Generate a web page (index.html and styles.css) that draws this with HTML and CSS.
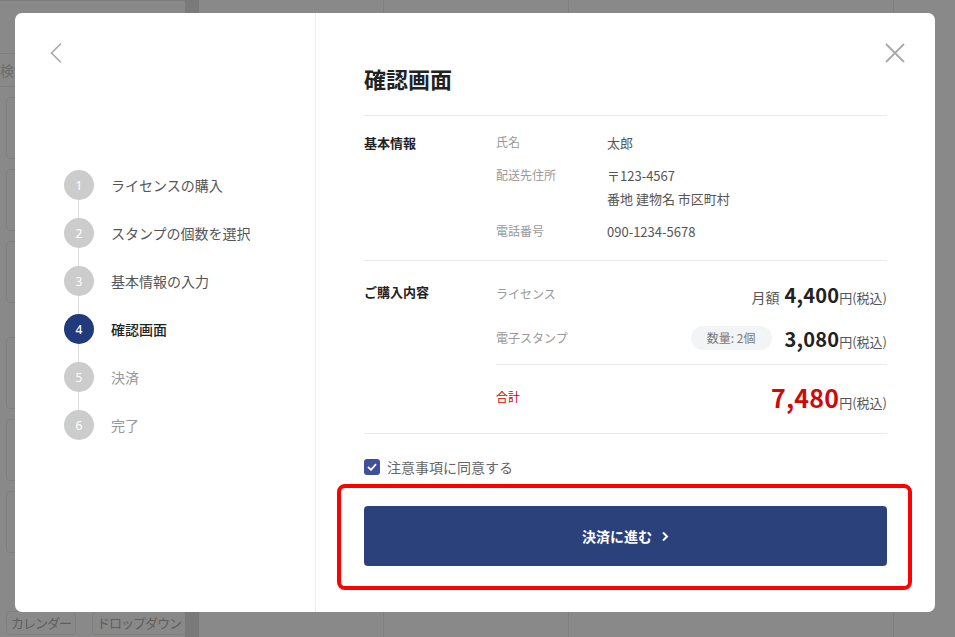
FILE: index.html
```html
<!DOCTYPE html>
<html lang="ja">
<head>
<meta charset="UTF-8">
<meta name="viewport" content="width=device-width, initial-scale=1.0">
<title>確認画面</title>
<link rel="stylesheet" href="styles.css">
</head>
<body>
    <!-- 背景のアプリ画面 (オーバーレイで暗くなっている) -->
    <div class="app">
        <div class="app-side">
            <div class="app-search">検索</div>
            <div class="app-card"></div>
            <div class="app-card"></div>
            <div class="app-card"></div>
            <div class="app-card tall"></div>
            <div class="app-card"></div>
            <div class="app-card"></div>
            <div class="app-buttons">
                <span class="app-btn">カレンダー</span>
                <span class="app-btn">ドロップダウン</span>
            </div>
        </div>
        <div class="app-strip"></div>
        <div class="app-main">
            <div class="app-col"></div>
            <div class="app-col"></div>
            <div class="app-col last"></div>
        </div>
    </div>

    <div class="overlay">
        <div class="modal">
            <!-- 左: ステップ -->
            <div class="modal-steps">
                <button class="back">
                    <svg width="14" height="22" viewBox="0 0 14 22"><polyline points="12,1.5 2.5,11 12,20.5" fill="none" stroke="#a8a8a8" stroke-width="1.6"/></svg>
                </button>
                <ol class="steps">
                    <li class="done"><span class="num">1</span>ライセンスの購入</li>
                    <li class="done"><span class="num">2</span>スタンプの個数を選択</li>
                    <li class="done"><span class="num">3</span>基本情報の入力</li>
                    <li class="current"><span class="num">4</span>確認画面</li>
                    <li><span class="num">5</span>決済</li>
                    <li><span class="num">6</span>完了</li>
                </ol>
            </div>

            <!-- 右: 確認内容 -->
            <div class="modal-body">
                <button class="close">
                    <svg width="20" height="20" viewBox="0 0 20 20"><path d="M1 1L19 19M19 1L1 19" stroke="#a8a8a8" stroke-width="1.8"/></svg>
                </button>
                <h1 class="title">確認画面</h1>

                <div class="section">
                    <div class="section-head">基本情報</div>
                    <div class="section-rows info">
                        <div class="row"><span class="label">氏名</span><span class="value">太郎</span></div>
                        <div class="row"><span class="label">配送先住所</span><span class="value">〒123-4567<br>番地 建物名 市区町村</span></div>
                        <div class="row"><span class="label">電話番号</span><span class="value">090-1234-5678</span></div>
                    </div>
                </div>

                <div class="section">
                    <div class="section-head">ご購入内容</div>
                    <div class="section-rows">
                        <div class="items">
                            <div class="row price-row">
                                <span class="label">ライセンス</span>
                                <span class="price"><span class="prefix">月額</span><b>4,400</b><span class="unit">円(税込)</span></span>
                            </div>
                            <div class="row price-row">
                                <span class="label">電子スタンプ</span>
                                <span class="price"><span class="badge">数量: 2個</span><b>3,080</b><span class="unit">円(税込)</span></span>
                            </div>
                        </div>
                        <div class="row price-row total">
                            <span class="label">合計</span>
                            <span class="price"><b>7,480</b><span class="unit">円(税込)</span></span>
                        </div>
                    </div>
                </div>

                <label class="agree">
                    <span class="check">
                        <svg width="10" height="8" viewBox="0 0 10 8"><polyline points="1,4 4,6.8 9,1.2" fill="none" stroke="#fff" stroke-width="1.8"/></svg>
                    </span>
                    注意事項に同意する
                </label>

                <div class="highlight">
                    <button class="pay">決済に進む
                        <svg width="8" height="11" viewBox="0 0 8 11"><polyline points="2,1.5 6,5.5 2,9.5" fill="none" stroke="#fff" stroke-width="2"/></svg>
                    </button>
                </div>
            </div>
        </div>
    </div>
</body>
</html>
```

FILE: styles.css
```css
*{
    box-sizing: border-box;
}
body{
    margin: 0;
    width: 955px;
    height: 637px;
    overflow: hidden;
    font-family: "Noto Sans CJK JP", "Noto Sans", sans-serif;
    color: #222;
    background: #898989;
    position: relative;
}
button{
    font-family: inherit;
    border: none;
    background: none;
    padding: 0;
    cursor: pointer;
}

/* ---- 背景のアプリ ---- */
.app{
    display: flex;
    height: 100%;
}
.app-side{
    width: 185px;
    display: flex;
    flex-direction: column;
    gap: 10px;
    padding: 20px 6px 2px 6px;
    border-top: 1px solid #7d7d7d;
}
.app-search{
    height: 34px;
    margin: 32px -6px 0 -6px;
    border-top: 1px solid #7f7f7f;
    border-bottom: 1px solid #7f7f7f;
    color: #6c6c6c;
    font-size: 14px;
    line-height: 32px;
}
.app-card{
    height: 62px;
    border: 1px solid #7f7f7f;
    border-radius: 4px;
}
.app-card.tall{
    margin-top: 24px;
    height: 72px;
}
.app-buttons{
    display: flex;
    gap: 16px;
    margin-top: auto;
}
.app-btn{
    border: 1px solid #7f7f7f;
    border-radius: 4px;
    font-size: 13px;
    line-height: 18px;
    color: #5e5e5e;
    padding: 2px 4px;
    white-space: nowrap;
    letter-spacing: -1px;
}
.app-strip{
    width: 14px;
    background: #7a7a7a;
}
.app-main{
    flex: 1;
    display: flex;
}
.app-col{
    width: 185px;
    border-right: 1px solid #7f7f7f;
}
.app-col.last{
    width: 325px;
}

/* ---- モーダル ---- */
.overlay{
    position: absolute;
    inset: 0;
    padding: 13px 20px 25px 15px;
    display: flex;
}
.modal{
    flex: 1;
    display: flex;
    background: #fff;
    border-radius: 7px;
    overflow: hidden;
}
.modal-steps{
    width: 301px;
    border-right: 1px solid #eeeeee;
    padding: 29px 0 0 34px;
}
.back{
    width: 14px;
    height: 22px;
    display: block;
}
.steps{
    list-style: none;
    margin: 106px 0 0 15px;
    padding: 0;
    display: flex;
    flex-direction: column;
    gap: 18px;
    position: relative;
}
.steps:before{
    content: "";
    position: absolute;
    left: 14px;
    top: 15px;
    bottom: 15px;
    width: 1px;
    background: #dddddd;
}
.steps li{
    display: flex;
    align-items: center;
    gap: 17px;
    height: 30px;
    font-size: 14px;
    color: #999;
    position: relative;
}
.steps li.done{
    color: #555;
}
.steps li.current{
    color: #222;
    font-weight: 500;
}
.num{
    width: 30px;
    height: 30px;
    border-radius: 50%;
    background: #cccccc;
    color: #fff;
    font-size: 12px;
    display: flex;
    align-items: center;
    justify-content: center;
    font-family: "Noto Sans", sans-serif;
}
.current .num{
    background: #213a7b;
}

.modal-body{
    flex: 1;
    position: relative;
    padding: 49px 48px 0 48px;
    display: flex;
    flex-direction: column;
}
.close{
    position: absolute;
    top: 30px;
    right: 30px;
    width: 20px;
    height: 20px;
}
.title{
    margin: 0 0 21px 0;
    font-size: 22px;
    line-height: 32px;
    font-weight: 700;
    color: #222;
}
.section{
    display: flex;
    border-top: 1px solid #e9e9e9;
    padding: 15px 0 17px 0;
}
.section + .section{
    padding: 19px 0 20px 0;
}
.section-head{
    width: 132px;
    font-size: 13px;
    line-height: 22px;
    font-weight: 700;
    color: #222;
    padding-top: 1px;
}
.section-rows{
    flex: 1;
    display: flex;
    flex-direction: column;
}
.info{
    gap: 10px;
}
.row{
    display: flex;
    align-items: flex-start;
}
.label{
    width: 111px;
    font-size: 12px;
    line-height: 22px;
    color: #999;
}
.value{
    font-size: 13px;
    line-height: 23px;
    color: #555;
}
.items{
    display: flex;
    flex-direction: column;
    gap: 16px;
    padding-bottom: 12px;
    border-bottom: 1px solid #e9e9e9;
}
.price-row{
    justify-content: space-between;
    align-items: center;
    height: 28px;
}
.price{
    display: flex;
    align-items: baseline;
    font-size: 13px;
    color: #555;
}
.price b{
    font-size: 20px;
    font-weight: 700;
    color: #222;
    letter-spacing: 0.2px;
}
.prefix{
    font-size: 14px;
    margin-right: 5px;
}
.unit{
    font-size: 13px;
}
.badge{
    align-self: center;
    background: #f3f4f6;
    border-radius: 12px;
    font-size: 12px;
    color: #777;
    padding: 0 16px;
    line-height: 24px;
    margin-right: 13px;
}
.total{
    margin-top: 16px;
    height: 32px;
}
.total .label{
    color: #d00000;
}
.total b{
    font-size: 25px;
    color: #cc0a0a;
}
.agree{
    display: flex;
    align-items: center;
    gap: 7px;
    border-top: 1px solid #e9e9e9;
    padding-top: 23px;
    height: 43px;
    font-size: 14px;
    color: #666;
}
.check{
    width: 16px;
    height: 16px;
    border-radius: 3px;
    background: #3e4f9c;
    display: flex;
    align-items: center;
    justify-content: center;
}
.highlight{
    margin: 8px -25px 0 -27px;
    border: 4px solid #ff0000;
    border-radius: 8px;
    padding: 18px 21px 20px 23px;
}
.pay{
    width: 100%;
    height: 60px;
    border-radius: 4px;
    background: #2b417c;
    color: #fff;
    font-size: 14px;
    font-weight: 700;
    display: flex;
    align-items: center;
    justify-content: center;
    gap: 9px;
}
```
